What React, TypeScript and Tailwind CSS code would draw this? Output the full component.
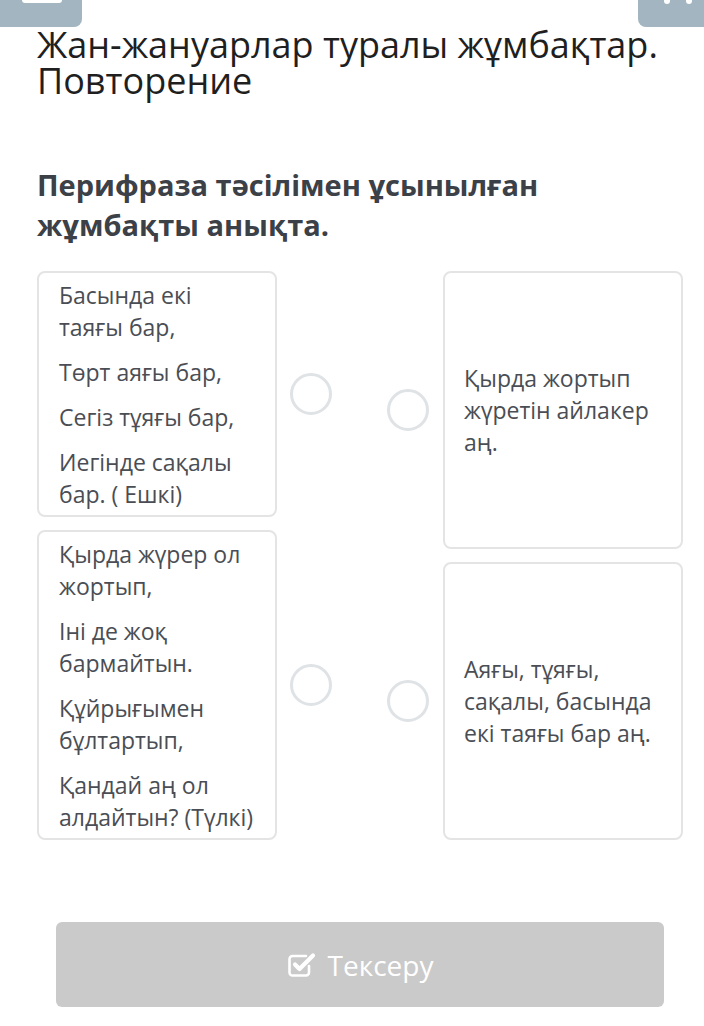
import React from "react";

const font = { fontFamily: '"Open Sans", "Noto Sans", sans-serif' };

function Circle() {
  return <div className="w-[42px] h-[42px] shrink-0 rounded-full border-[3px] border-[#dfe3e6] bg-white" />;
}

function LeftCard({ paras }: { paras: string[] }) {
  return (
    <div className="flex items-center gap-[13px]">
      <div className="w-[240px] shrink-0 rounded-lg border-2 border-[#e4e4e4] bg-white pl-[20px] pr-[18px] py-[5.5px] flex flex-col gap-[13px]">
        {paras.map((p, i) => (
          <p key={i} className="text-[23px] leading-[32px] text-[#4a4e54]">{p}</p>
        ))}
      </div>
      <Circle />
    </div>
  );
}

function RightCard({ text }: { text: string }) {
  return (
    <div className="flex-1 flex items-center gap-[14px]">
      <Circle />
      <div className="w-[240px] self-stretch shrink-0 rounded-lg border-2 border-[#e4e4e4] bg-white pl-[19px] pr-[12px] flex items-center">
        <p className="text-[23px] leading-[32px] text-[#4a4e54]">{text}</p>
      </div>
    </div>
  );
}

export default function App() {
  return (
    <div className="w-[704px] h-[1026px] bg-white overflow-hidden" style={font}>
      <div className="flex justify-between h-[27px]">
        <div className="w-[82px] h-[27px] bg-[#a2b5c1] rounded-br-lg relative">
          <div className="absolute left-[22px] top-0 w-[40px] h-[3px] bg-white rounded-b-sm" />
        </div>
        <div className="w-[66px] h-[27px] bg-[#a2b5c1] rounded-bl-lg relative">
          <div className="absolute left-[26px] top-0 w-[6px] h-[4px] bg-white rounded-b-full" />
          <div className="absolute left-[48px] top-0 w-[6px] h-[4px] bg-white rounded-b-full" />
        </div>
      </div>
      <div className="px-[37px]">
        <h1 className="text-[36px] leading-[36px] text-[#1f1f1f] font-normal">
          Жан-жануарлар туралы жұмбақтар. Повторение
        </h1>
        <h2 className="mt-[66px] text-[29px] leading-[40px] font-bold text-[#3c4047]">
          Перифраза тәсілімен ұсынылған жұмбақты анықта.
        </h2>
        <div className="mt-[26px] flex gap-[55px]">
          <div className="flex flex-col gap-[13px]">
            <LeftCard paras={["Басында екі таяғы бар,", "Төрт аяғы бар,", "Сегіз тұяғы бар,", "Иегінде сақалы бар. ( Ешкі)"]} />
            <LeftCard paras={["Қырда жүрер ол жортып,", "Іні де жоқ бармайтын.", "Құйрығымен бұлтартып,", "Қандай аң ол алдайтын? (Түлкі)"]} />
          </div>
          <div className="flex flex-col gap-[13px]">
            <RightCard text="Қырда жортып жүретін айлакер аң." />
            <RightCard text="Аяғы, тұяғы, сақалы, басында екі таяғы бар аң." />
          </div>
        </div>
      </div>
      <div className="ml-[56px] mr-[40px] mt-[82px]">
        <div className="h-[85px] rounded-md bg-[#cacaca] flex items-center justify-center gap-[11px] text-white">
          <svg width="30" height="28" viewBox="0 0 30 28" fill="none">
            <path d="M22 15v6.5a3 3 0 0 1-3 3H5.5a3 3 0 0 1-3-3V8a3 3 0 0 1 3-3H19" stroke="white" strokeWidth="2.6" strokeLinecap="round" />
            <path d="M8 13.5l4.5 4.5L26 4.5" stroke="white" strokeWidth="4.2" strokeLinecap="round" strokeLinejoin="round" />
          </svg>
          <span className="text-[28px] leading-none">Тексеру</span>
        </div>
      </div>
    </div>
  );
}
